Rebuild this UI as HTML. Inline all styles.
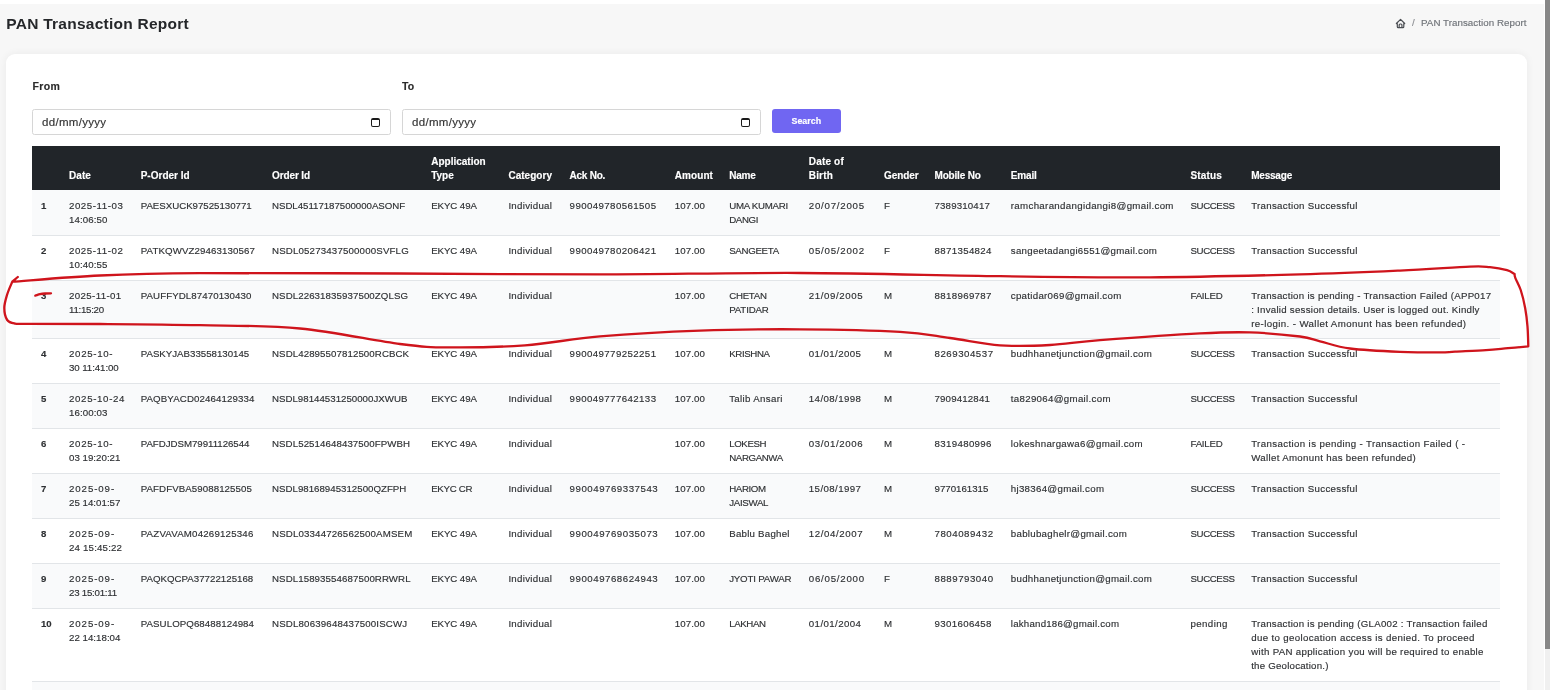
<!DOCTYPE html>
<html><head><meta charset="utf-8">
<style>
*{margin:0;padding:0;box-sizing:border-box}
html,body{width:1550px;height:690px;overflow:hidden;background:#fff;-webkit-font-smoothing:antialiased;font-family:"Liberation Sans",sans-serif;color:#2e3033}
.abs{position:absolute}
#bg{position:absolute;left:0;top:4px;width:1544px;height:686px;background:#f7f7f7}
#thumb{position:absolute;left:1545px;top:0;width:5px;height:649px;background:#878787}
#track{position:absolute;left:1545px;top:649px;width:5px;height:41px;background:#f0f0f0}
#card{position:absolute;left:6px;top:54px;width:1521px;height:700px;background:#fff;border-radius:9px;box-shadow:0 0 8px rgba(0,0,0,0.06)}
.t{position:absolute;white-space:nowrap;-webkit-text-stroke:0.15px currentColor}
.rw{position:absolute;left:32px;width:1468px}
.bd{position:absolute;left:32px;width:1468px;height:1px;background:#e2e5e8}
#thead{position:absolute;left:32px;top:146px;width:1468px;height:44px;background:#212529}
.inp{position:absolute;top:109px;height:26px;border:1px solid #d6d6d6;border-radius:2.5px;background:#fff}
.cal{position:absolute;top:7.6px;width:9px;height:9px;border:1.1px solid #1a1a1a;border-top-width:2.4px;border-radius:2px}
#btn{position:absolute;left:772px;top:109px;width:69px;height:24px;background:#7066f2;border-radius:3px}
.ov{position:absolute;left:0;top:0;pointer-events:none}
</style></head><body><div style="position:absolute;left:0;top:0;width:1550px;height:690px;will-change:transform">
<div id="bg"></div>
<div id="thumb"></div><div id="track"></div>
<div class="t" id="title" style="left:6.3px;top:13.5px;font-size:15.5px;line-height:20px;font-weight:bold;color:#25272a;letter-spacing:0.25px;-webkit-text-stroke:0">PAN Transaction Report</div>
<svg class="abs" style="left:1394.9px;top:17.6px" width="11.1" height="11.1" viewBox="0 0 24 24"><path d="M5 12H3l9-9 9 9h-2M5 12v7a2 2 0 0 0 2 2h10a2 2 0 0 0 2-2v-7M9 21v-6a2 2 0 0 1 2-2h2a2 2 0 0 1 2 2v6" fill="none" stroke="#4a4d52" stroke-width="2.6" stroke-linecap="round" stroke-linejoin="round"/></svg>
<div class="t" style="left:1412px;top:17px;font-size:9.8px;line-height:12px;color:#8a8d91">/</div>
<div class="t" style="left:1421px;top:17px;font-size:9.75px;line-height:12px;color:#6f7378;letter-spacing:0.05px">PAN Transaction Report</div>
<div id="card"></div>
<div class="t" style="left:32.5px;top:80px;font-size:10.5px;line-height:12px;font-weight:bold;color:#2b2b2b;letter-spacing:0.4px">From</div>
<div class="t" style="left:402px;top:80px;font-size:10.5px;line-height:12px;font-weight:bold;color:#2b2b2b">To</div>
<div class="inp" style="left:32px;width:359px"><div class="t" style="left:9px;top:5.5px;font-size:11.5px;line-height:12px;color:#333;letter-spacing:0.3px">dd/mm/yyyy</div><div class="cal" style="left:338px"></div></div>
<div class="inp" style="left:402px;width:359px"><div class="t" style="left:9px;top:5.5px;font-size:11.5px;line-height:12px;color:#333;letter-spacing:0.3px">dd/mm/yyyy</div><div class="cal" style="left:338px"></div></div>
<div id="btn"><div class="t" style="left:19.5px;top:5.8px;font-size:8.9px;line-height:12px;color:#fff;font-weight:bold">Search</div></div>
<div id="thead"></div>
<div class="rw" style="top:190px;height:45px;background:#f9fafb"></div>
<div class="rw" style="top:235px;height:45px;background:#ffffff"></div>
<div class="rw" style="top:280px;height:58px;background:#f9fafb"></div>
<div class="rw" style="top:338px;height:45px;background:#ffffff"></div>
<div class="rw" style="top:383px;height:45px;background:#f9fafb"></div>
<div class="rw" style="top:428px;height:45px;background:#ffffff"></div>
<div class="rw" style="top:473px;height:45px;background:#f9fafb"></div>
<div class="rw" style="top:518px;height:45px;background:#ffffff"></div>
<div class="rw" style="top:563px;height:45px;background:#f9fafb"></div>
<div class="rw" style="top:608px;height:73px;background:#ffffff"></div>
<div class="rw" style="top:681px;height:20px;background:#f9fafb"></div>
<div class="bd" style="top:235.0px"></div>
<div class="bd" style="top:280.0px"></div>
<div class="bd" style="top:338.0px"></div>
<div class="bd" style="top:383.0px"></div>
<div class="bd" style="top:428.0px"></div>
<div class="bd" style="top:473.0px"></div>
<div class="bd" style="top:518.0px"></div>
<div class="bd" style="top:563.0px"></div>
<div class="bd" style="top:608.0px"></div>
<div class="bd" style="top:681.0px"></div>
<div class="t" style="left:69.00px;top:168.53px;line-height:14px;font-size:10px;font-weight:bold;color:#fff"><span style="letter-spacing:0.081px">Date</span></div>
<div class="t" style="left:140.70px;top:168.53px;line-height:14px;font-size:10px;font-weight:bold;color:#fff"><span style="letter-spacing:0.010px">P-Order Id</span></div>
<div class="t" style="left:272.00px;top:168.53px;line-height:14px;font-size:10px;font-weight:bold;color:#fff"><span style="letter-spacing:-0.112px">Order Id</span></div>
<div class="t" style="left:431.20px;top:154.53px;line-height:14px;font-size:10px;font-weight:bold;color:#fff"><span style="letter-spacing:0.005px">Application</span><br><span style="letter-spacing:-0.024px">Type</span></div>
<div class="t" style="left:508.40px;top:168.53px;line-height:14px;font-size:10px;font-weight:bold;color:#fff"><span style="letter-spacing:0.032px">Category</span></div>
<div class="t" style="left:569.60px;top:168.53px;line-height:14px;font-size:10px;font-weight:bold;color:#fff"><span style="letter-spacing:-0.262px">Ack No.</span></div>
<div class="t" style="left:674.80px;top:168.53px;line-height:14px;font-size:10px;font-weight:bold;color:#fff"><span style="letter-spacing:0.072px">Amount</span></div>
<div class="t" style="left:729.20px;top:168.53px;line-height:14px;font-size:10px;font-weight:bold;color:#fff"><span style="letter-spacing:-0.234px">Name</span></div>
<div class="t" style="left:808.80px;top:154.53px;line-height:14px;font-size:10px;font-weight:bold;color:#fff"><span style="letter-spacing:0.173px">Date of</span><br><span style="letter-spacing:0.154px">Birth</span></div>
<div class="t" style="left:884.00px;top:168.53px;line-height:14px;font-size:10px;font-weight:bold;color:#fff"><span style="letter-spacing:-0.052px">Gender</span></div>
<div class="t" style="left:934.50px;top:168.53px;line-height:14px;font-size:10px;font-weight:bold;color:#fff"><span style="letter-spacing:-0.186px">Mobile No</span></div>
<div class="t" style="left:1010.80px;top:168.53px;line-height:14px;font-size:10px;font-weight:bold;color:#fff"><span style="letter-spacing:-0.176px">Email</span></div>
<div class="t" style="left:1190.50px;top:168.53px;line-height:14px;font-size:10px;font-weight:bold;color:#fff"><span style="letter-spacing:0.173px">Status</span></div>
<div class="t" style="left:1251.20px;top:168.53px;line-height:14px;font-size:10px;font-weight:bold;color:#fff"><span style="letter-spacing:-0.207px">Message</span></div>
<div class="t" style="left:41px;top:198.74px;line-height:14px;font-size:9.6px;font-weight:bold">1</div>
<div class="t" style="left:69.00px;top:198.84px;line-height:14px;font-size:9.7px"><span style="letter-spacing:0.549px">2025-11-03</span><br><span style="letter-spacing:0.088px">14:06:50</span></div>
<div class="t" style="left:140.70px;top:198.84px;line-height:14px;font-size:9.7px"><span style="letter-spacing:-0.013px">PAESXUCK97525130771</span></div>
<div class="t" style="left:272.00px;top:198.84px;line-height:14px;font-size:9.7px"><span style="letter-spacing:-0.037px">NSDL45117187500000ASONF</span></div>
<div class="t" style="left:431.20px;top:198.84px;line-height:14px;font-size:9.7px"><span style="letter-spacing:-0.082px">EKYC 49A</span></div>
<div class="t" style="left:508.40px;top:198.84px;line-height:14px;font-size:9.7px"><span style="letter-spacing:0.291px">Individual</span></div>
<div class="t" style="left:569.60px;top:198.84px;line-height:14px;font-size:9.7px"><span style="letter-spacing:0.402px">990049780561505</span></div>
<div class="t" style="left:674.80px;top:198.84px;line-height:14px;font-size:9.7px"><span style="letter-spacing:0.084px">107.00</span></div>
<div class="t" style="left:729.20px;top:198.84px;line-height:14px;font-size:9.7px"><span style="letter-spacing:-0.273px">UMA KUMARI</span><br><span style="letter-spacing:-0.365px">DANGI</span></div>
<div class="t" style="left:808.80px;top:198.84px;line-height:14px;font-size:9.7px"><span style="letter-spacing:0.762px">20/07/2005</span></div>
<div class="t" style="left:884.00px;top:198.84px;line-height:14px;font-size:9.7px"><span style="letter-spacing:-0.352px">F</span></div>
<div class="t" style="left:934.50px;top:198.84px;line-height:14px;font-size:9.7px"><span style="letter-spacing:0.165px">7389310417</span></div>
<div class="t" style="left:1010.80px;top:198.84px;line-height:14px;font-size:9.7px"><span style="letter-spacing:0.329px">ramcharandangidangi8@gmail.com</span></div>
<div class="t" style="left:1190.50px;top:198.84px;line-height:14px;font-size:9.7px"><span style="letter-spacing:-0.398px">SUCCESS</span></div>
<div class="t" style="left:1251.20px;top:198.84px;line-height:14px;font-size:9.7px"><span style="letter-spacing:0.305px">Transaction Successful</span></div>
<div class="t" style="left:41px;top:243.74px;line-height:14px;font-size:9.6px;font-weight:bold">2</div>
<div class="t" style="left:69.00px;top:243.84px;line-height:14px;font-size:9.7px"><span style="letter-spacing:0.549px">2025-11-02</span><br><span style="letter-spacing:0.088px">10:40:55</span></div>
<div class="t" style="left:140.70px;top:243.84px;line-height:14px;font-size:9.7px"><span style="letter-spacing:0.113px">PATKQWVZ29463130567</span></div>
<div class="t" style="left:272.00px;top:243.84px;line-height:14px;font-size:9.7px"><span style="letter-spacing:0.167px">NSDL05273437500000SVFLG</span></div>
<div class="t" style="left:431.20px;top:243.84px;line-height:14px;font-size:9.7px"><span style="letter-spacing:-0.082px">EKYC 49A</span></div>
<div class="t" style="left:508.40px;top:243.84px;line-height:14px;font-size:9.7px"><span style="letter-spacing:0.291px">Individual</span></div>
<div class="t" style="left:569.60px;top:243.84px;line-height:14px;font-size:9.7px"><span style="letter-spacing:0.402px">990049780206421</span></div>
<div class="t" style="left:674.80px;top:243.84px;line-height:14px;font-size:9.7px"><span style="letter-spacing:0.084px">107.00</span></div>
<div class="t" style="left:729.20px;top:243.84px;line-height:14px;font-size:9.7px"><span style="letter-spacing:-0.303px">SANGEETA</span></div>
<div class="t" style="left:808.80px;top:243.84px;line-height:14px;font-size:9.7px"><span style="letter-spacing:0.762px">05/05/2002</span></div>
<div class="t" style="left:884.00px;top:243.84px;line-height:14px;font-size:9.7px"><span style="letter-spacing:-0.352px">F</span></div>
<div class="t" style="left:934.50px;top:243.84px;line-height:14px;font-size:9.7px"><span style="letter-spacing:0.343px">8871354824</span></div>
<div class="t" style="left:1010.80px;top:243.84px;line-height:14px;font-size:9.7px"><span style="letter-spacing:0.268px">sangeetadangi6551@gmail.com</span></div>
<div class="t" style="left:1190.50px;top:243.84px;line-height:14px;font-size:9.7px"><span style="letter-spacing:-0.398px">SUCCESS</span></div>
<div class="t" style="left:1251.20px;top:243.84px;line-height:14px;font-size:9.7px"><span style="letter-spacing:0.305px">Transaction Successful</span></div>
<div class="t" style="left:41px;top:288.74px;line-height:14px;font-size:9.6px;font-weight:bold">3</div>
<div class="t" style="left:69.00px;top:288.84px;line-height:14px;font-size:9.7px"><span style="letter-spacing:0.371px">2025-11-01</span><br><span style="letter-spacing:-0.265px">11:15:20</span></div>
<div class="t" style="left:140.70px;top:288.84px;line-height:14px;font-size:9.7px"><span style="letter-spacing:0.087px">PAUFFYDL87470130430</span></div>
<div class="t" style="left:272.00px;top:288.84px;line-height:14px;font-size:9.7px"><span style="letter-spacing:0.087px">NSDL22631835937500ZQLSG</span></div>
<div class="t" style="left:431.20px;top:288.84px;line-height:14px;font-size:9.7px"><span style="letter-spacing:-0.082px">EKYC 49A</span></div>
<div class="t" style="left:508.40px;top:288.84px;line-height:14px;font-size:9.7px"><span style="letter-spacing:0.291px">Individual</span></div>
<div class="t" style="left:674.80px;top:288.84px;line-height:14px;font-size:9.7px"><span style="letter-spacing:0.084px">107.00</span></div>
<div class="t" style="left:729.20px;top:288.84px;line-height:14px;font-size:9.7px"><span style="letter-spacing:-0.275px">CHETAN</span><br><span style="letter-spacing:-0.152px">PATIDAR</span></div>
<div class="t" style="left:808.80px;top:288.84px;line-height:14px;font-size:9.7px"><span style="letter-spacing:0.585px">21/09/2005</span></div>
<div class="t" style="left:884.00px;top:288.84px;line-height:14px;font-size:9.7px"><span style="letter-spacing:-0.481px">M</span></div>
<div class="t" style="left:934.50px;top:288.84px;line-height:14px;font-size:9.7px"><span style="letter-spacing:0.343px">8818969787</span></div>
<div class="t" style="left:1010.80px;top:288.84px;line-height:14px;font-size:9.7px"><span style="letter-spacing:0.293px">cpatidar069@gmail.com</span></div>
<div class="t" style="left:1190.50px;top:288.84px;line-height:14px;font-size:9.7px"><span style="letter-spacing:-0.247px">FAILED</span></div>
<div class="t" style="left:1251.20px;top:288.84px;line-height:14px;font-size:9.7px"><span style="letter-spacing:0.271px">Transaction is pending - Transaction Failed (APP017</span><br><span style="letter-spacing:0.258px">: Invalid session details. User is logged out. Kindly</span><br><span style="letter-spacing:0.386px">re-login. - Wallet Amonunt has been refunded)</span></div>
<div class="t" style="left:41px;top:346.74px;line-height:14px;font-size:9.6px;font-weight:bold">4</div>
<div class="t" style="left:69.00px;top:346.84px;line-height:14px;font-size:9.7px"><span style="letter-spacing:0.687px">2025-10-</span><br><span style="letter-spacing:-0.075px">30 11:41:00</span></div>
<div class="t" style="left:140.70px;top:346.84px;line-height:14px;font-size:9.7px"><span style="letter-spacing:-0.005px">PASKYJAB33558130145</span></div>
<div class="t" style="left:272.00px;top:346.84px;line-height:14px;font-size:9.7px"><span style="letter-spacing:0.085px">NSDL42895507812500RCBCK</span></div>
<div class="t" style="left:431.20px;top:346.84px;line-height:14px;font-size:9.7px"><span style="letter-spacing:-0.082px">EKYC 49A</span></div>
<div class="t" style="left:508.40px;top:346.84px;line-height:14px;font-size:9.7px"><span style="letter-spacing:0.291px">Individual</span></div>
<div class="t" style="left:569.60px;top:346.84px;line-height:14px;font-size:9.7px"><span style="letter-spacing:0.402px">990049779252251</span></div>
<div class="t" style="left:674.80px;top:346.84px;line-height:14px;font-size:9.7px"><span style="letter-spacing:0.084px">107.00</span></div>
<div class="t" style="left:729.20px;top:346.84px;line-height:14px;font-size:9.7px"><span style="letter-spacing:-0.366px">KRISHNA</span></div>
<div class="t" style="left:808.80px;top:346.84px;line-height:14px;font-size:9.7px"><span style="letter-spacing:0.408px">01/01/2005</span></div>
<div class="t" style="left:884.00px;top:346.84px;line-height:14px;font-size:9.7px"><span style="letter-spacing:-0.481px">M</span></div>
<div class="t" style="left:934.50px;top:346.84px;line-height:14px;font-size:9.7px"><span style="letter-spacing:0.520px">8269304537</span></div>
<div class="t" style="left:1010.80px;top:346.84px;line-height:14px;font-size:9.7px"><span style="letter-spacing:0.303px">budhhanetjunction@gmail.com</span></div>
<div class="t" style="left:1190.50px;top:346.84px;line-height:14px;font-size:9.7px"><span style="letter-spacing:-0.398px">SUCCESS</span></div>
<div class="t" style="left:1251.20px;top:346.84px;line-height:14px;font-size:9.7px"><span style="letter-spacing:0.305px">Transaction Successful</span></div>
<div class="t" style="left:41px;top:391.74px;line-height:14px;font-size:9.6px;font-weight:bold">5</div>
<div class="t" style="left:69.00px;top:391.84px;line-height:14px;font-size:9.7px"><span style="letter-spacing:0.654px">2025-10-24</span><br><span style="letter-spacing:0.088px">16:00:03</span></div>
<div class="t" style="left:140.70px;top:391.84px;line-height:14px;font-size:9.7px"><span style="letter-spacing:0.115px">PAQBYACD02464129334</span></div>
<div class="t" style="left:272.00px;top:391.84px;line-height:14px;font-size:9.7px"><span style="letter-spacing:0.008px">NSDL98144531250000JXWUB</span></div>
<div class="t" style="left:431.20px;top:391.84px;line-height:14px;font-size:9.7px"><span style="letter-spacing:-0.082px">EKYC 49A</span></div>
<div class="t" style="left:508.40px;top:391.84px;line-height:14px;font-size:9.7px"><span style="letter-spacing:0.291px">Individual</span></div>
<div class="t" style="left:569.60px;top:391.84px;line-height:14px;font-size:9.7px"><span style="letter-spacing:0.402px">990049777642133</span></div>
<div class="t" style="left:674.80px;top:391.84px;line-height:14px;font-size:9.7px"><span style="letter-spacing:0.084px">107.00</span></div>
<div class="t" style="left:729.20px;top:391.84px;line-height:14px;font-size:9.7px"><span style="letter-spacing:0.335px">Talib Ansari</span></div>
<div class="t" style="left:808.80px;top:391.84px;line-height:14px;font-size:9.7px"><span style="letter-spacing:0.408px">14/08/1998</span></div>
<div class="t" style="left:884.00px;top:391.84px;line-height:14px;font-size:9.7px"><span style="letter-spacing:-0.481px">M</span></div>
<div class="t" style="left:934.50px;top:391.84px;line-height:14px;font-size:9.7px"><span style="letter-spacing:0.165px">7909412841</span></div>
<div class="t" style="left:1010.80px;top:391.84px;line-height:14px;font-size:9.7px"><span style="letter-spacing:0.311px">ta829064@gmail.com</span></div>
<div class="t" style="left:1190.50px;top:391.84px;line-height:14px;font-size:9.7px"><span style="letter-spacing:-0.398px">SUCCESS</span></div>
<div class="t" style="left:1251.20px;top:391.84px;line-height:14px;font-size:9.7px"><span style="letter-spacing:0.305px">Transaction Successful</span></div>
<div class="t" style="left:41px;top:436.74px;line-height:14px;font-size:9.6px;font-weight:bold">6</div>
<div class="t" style="left:69.00px;top:436.84px;line-height:14px;font-size:9.7px"><span style="letter-spacing:0.687px">2025-10-</span><br><span style="letter-spacing:0.021px">03 19:20:21</span></div>
<div class="t" style="left:140.70px;top:436.84px;line-height:14px;font-size:9.7px"><span style="letter-spacing:-0.029px">PAFDJDSM79911126544</span></div>
<div class="t" style="left:272.00px;top:436.84px;line-height:14px;font-size:9.7px"><span style="letter-spacing:0.082px">NSDL52514648437500FPWBH</span></div>
<div class="t" style="left:431.20px;top:436.84px;line-height:14px;font-size:9.7px"><span style="letter-spacing:-0.082px">EKYC 49A</span></div>
<div class="t" style="left:508.40px;top:436.84px;line-height:14px;font-size:9.7px"><span style="letter-spacing:0.291px">Individual</span></div>
<div class="t" style="left:674.80px;top:436.84px;line-height:14px;font-size:9.7px"><span style="letter-spacing:0.084px">107.00</span></div>
<div class="t" style="left:729.20px;top:436.84px;line-height:14px;font-size:9.7px"><span style="letter-spacing:-0.390px">LOKESH</span><br><span style="letter-spacing:-0.380px">NARGANWA</span></div>
<div class="t" style="left:808.80px;top:436.84px;line-height:14px;font-size:9.7px"><span style="letter-spacing:0.585px">03/01/2006</span></div>
<div class="t" style="left:884.00px;top:436.84px;line-height:14px;font-size:9.7px"><span style="letter-spacing:-0.481px">M</span></div>
<div class="t" style="left:934.50px;top:436.84px;line-height:14px;font-size:9.7px"><span style="letter-spacing:0.343px">8319480996</span></div>
<div class="t" style="left:1010.80px;top:436.84px;line-height:14px;font-size:9.7px"><span style="letter-spacing:0.316px">lokeshnargawa6@gmail.com</span></div>
<div class="t" style="left:1190.50px;top:436.84px;line-height:14px;font-size:9.7px"><span style="letter-spacing:-0.247px">FAILED</span></div>
<div class="t" style="left:1251.20px;top:436.84px;line-height:14px;font-size:9.7px"><span style="letter-spacing:0.373px">Transaction is pending - Transaction Failed ( -</span><br><span style="letter-spacing:0.324px">Wallet Amonunt has been refunded)</span></div>
<div class="t" style="left:41px;top:481.74px;line-height:14px;font-size:9.6px;font-weight:bold">7</div>
<div class="t" style="left:69.00px;top:481.84px;line-height:14px;font-size:9.7px"><span style="letter-spacing:0.909px">2025-09-</span><br><span style="letter-spacing:0.021px">25 14:01:57</span></div>
<div class="t" style="left:140.70px;top:481.84px;line-height:14px;font-size:9.7px"><span style="letter-spacing:0.085px">PAFDFVBA59088125505</span></div>
<div class="t" style="left:272.00px;top:481.84px;line-height:14px;font-size:9.7px"><span style="letter-spacing:0.010px">NSDL98168945312500QZFPH</span></div>
<div class="t" style="left:431.20px;top:481.84px;line-height:14px;font-size:9.7px"><span style="letter-spacing:-0.307px">EKYC CR</span></div>
<div class="t" style="left:508.40px;top:481.84px;line-height:14px;font-size:9.7px"><span style="letter-spacing:0.291px">Individual</span></div>
<div class="t" style="left:569.60px;top:481.84px;line-height:14px;font-size:9.7px"><span style="letter-spacing:0.520px">990049769337543</span></div>
<div class="t" style="left:674.80px;top:481.84px;line-height:14px;font-size:9.7px"><span style="letter-spacing:0.084px">107.00</span></div>
<div class="t" style="left:729.20px;top:481.84px;line-height:14px;font-size:9.7px"><span style="letter-spacing:-0.385px">HARIOM</span><br><span style="letter-spacing:-0.301px">JAISWAL</span></div>
<div class="t" style="left:808.80px;top:481.84px;line-height:14px;font-size:9.7px"><span style="letter-spacing:0.408px">15/08/1997</span></div>
<div class="t" style="left:884.00px;top:481.84px;line-height:14px;font-size:9.7px"><span style="letter-spacing:-0.481px">M</span></div>
<div class="t" style="left:934.50px;top:481.84px;line-height:14px;font-size:9.7px"><span style="letter-spacing:-0.012px">9770161315</span></div>
<div class="t" style="left:1010.80px;top:481.84px;line-height:14px;font-size:9.7px"><span style="letter-spacing:0.296px">hj38364@gmail.com</span></div>
<div class="t" style="left:1190.50px;top:481.84px;line-height:14px;font-size:9.7px"><span style="letter-spacing:-0.398px">SUCCESS</span></div>
<div class="t" style="left:1251.20px;top:481.84px;line-height:14px;font-size:9.7px"><span style="letter-spacing:0.305px">Transaction Successful</span></div>
<div class="t" style="left:41px;top:526.74px;line-height:14px;font-size:9.6px;font-weight:bold">8</div>
<div class="t" style="left:69.00px;top:526.84px;line-height:14px;font-size:9.7px"><span style="letter-spacing:0.909px">2025-09-</span><br><span style="letter-spacing:0.182px">24 15:45:22</span></div>
<div class="t" style="left:140.70px;top:526.84px;line-height:14px;font-size:9.7px"><span style="letter-spacing:0.194px">PAZVAVAM04269125346</span></div>
<div class="t" style="left:272.00px;top:526.84px;line-height:14px;font-size:9.7px"><span style="letter-spacing:0.158px">NSDL03344726562500AMSEM</span></div>
<div class="t" style="left:431.20px;top:526.84px;line-height:14px;font-size:9.7px"><span style="letter-spacing:-0.082px">EKYC 49A</span></div>
<div class="t" style="left:508.40px;top:526.84px;line-height:14px;font-size:9.7px"><span style="letter-spacing:0.291px">Individual</span></div>
<div class="t" style="left:569.60px;top:526.84px;line-height:14px;font-size:9.7px"><span style="letter-spacing:0.520px">990049769035073</span></div>
<div class="t" style="left:674.80px;top:526.84px;line-height:14px;font-size:9.7px"><span style="letter-spacing:0.084px">107.00</span></div>
<div class="t" style="left:729.20px;top:526.84px;line-height:14px;font-size:9.7px"><span style="letter-spacing:0.238px">Bablu Baghel</span></div>
<div class="t" style="left:808.80px;top:526.84px;line-height:14px;font-size:9.7px"><span style="letter-spacing:0.585px">12/04/2007</span></div>
<div class="t" style="left:884.00px;top:526.84px;line-height:14px;font-size:9.7px"><span style="letter-spacing:-0.481px">M</span></div>
<div class="t" style="left:934.50px;top:526.84px;line-height:14px;font-size:9.7px"><span style="letter-spacing:0.520px">7804089432</span></div>
<div class="t" style="left:1010.80px;top:526.84px;line-height:14px;font-size:9.7px"><span style="letter-spacing:0.287px">bablubaghelr@gmail.com</span></div>
<div class="t" style="left:1190.50px;top:526.84px;line-height:14px;font-size:9.7px"><span style="letter-spacing:-0.398px">SUCCESS</span></div>
<div class="t" style="left:1251.20px;top:526.84px;line-height:14px;font-size:9.7px"><span style="letter-spacing:0.305px">Transaction Successful</span></div>
<div class="t" style="left:41px;top:571.74px;line-height:14px;font-size:9.6px;font-weight:bold">9</div>
<div class="t" style="left:69.00px;top:571.84px;line-height:14px;font-size:9.7px"><span style="letter-spacing:0.909px">2025-09-</span><br><span style="letter-spacing:-0.236px">23 15:01:11</span></div>
<div class="t" style="left:140.70px;top:571.84px;line-height:14px;font-size:9.7px"><span style="letter-spacing:0.020px">PAQKQCPA37722125168</span></div>
<div class="t" style="left:272.00px;top:571.84px;line-height:14px;font-size:9.7px"><span style="letter-spacing:0.088px">NSDL15893554687500RRWRL</span></div>
<div class="t" style="left:431.20px;top:571.84px;line-height:14px;font-size:9.7px"><span style="letter-spacing:-0.082px">EKYC 49A</span></div>
<div class="t" style="left:508.40px;top:571.84px;line-height:14px;font-size:9.7px"><span style="letter-spacing:0.291px">Individual</span></div>
<div class="t" style="left:569.60px;top:571.84px;line-height:14px;font-size:9.7px"><span style="letter-spacing:0.520px">990049768624943</span></div>
<div class="t" style="left:674.80px;top:571.84px;line-height:14px;font-size:9.7px"><span style="letter-spacing:0.084px">107.00</span></div>
<div class="t" style="left:729.20px;top:571.84px;line-height:14px;font-size:9.7px"><span style="letter-spacing:-0.187px">JYOTI PAWAR</span></div>
<div class="t" style="left:808.80px;top:571.84px;line-height:14px;font-size:9.7px"><span style="letter-spacing:0.762px">06/05/2000</span></div>
<div class="t" style="left:884.00px;top:571.84px;line-height:14px;font-size:9.7px"><span style="letter-spacing:-0.352px">F</span></div>
<div class="t" style="left:934.50px;top:571.84px;line-height:14px;font-size:9.7px"><span style="letter-spacing:0.520px">8889793040</span></div>
<div class="t" style="left:1010.80px;top:571.84px;line-height:14px;font-size:9.7px"><span style="letter-spacing:0.303px">budhhanetjunction@gmail.com</span></div>
<div class="t" style="left:1190.50px;top:571.84px;line-height:14px;font-size:9.7px"><span style="letter-spacing:-0.398px">SUCCESS</span></div>
<div class="t" style="left:1251.20px;top:571.84px;line-height:14px;font-size:9.7px"><span style="letter-spacing:0.305px">Transaction Successful</span></div>
<div class="t" style="left:41px;top:616.74px;line-height:14px;font-size:9.6px;font-weight:bold">10</div>
<div class="t" style="left:69.00px;top:616.84px;line-height:14px;font-size:9.7px"><span style="letter-spacing:0.909px">2025-09-</span><br><span style="letter-spacing:0.021px">22 14:18:04</span></div>
<div class="t" style="left:140.70px;top:616.84px;line-height:14px;font-size:9.7px"><span style="letter-spacing:0.079px">PASULOPQ68488124984</span></div>
<div class="t" style="left:272.00px;top:616.84px;line-height:14px;font-size:9.7px"><span style="letter-spacing:0.172px">NSDL80639648437500ISCWJ</span></div>
<div class="t" style="left:431.20px;top:616.84px;line-height:14px;font-size:9.7px"><span style="letter-spacing:-0.082px">EKYC 49A</span></div>
<div class="t" style="left:508.40px;top:616.84px;line-height:14px;font-size:9.7px"><span style="letter-spacing:0.291px">Individual</span></div>
<div class="t" style="left:674.80px;top:616.84px;line-height:14px;font-size:9.7px"><span style="letter-spacing:0.084px">107.00</span></div>
<div class="t" style="left:729.20px;top:616.84px;line-height:14px;font-size:9.7px"><span style="letter-spacing:-0.385px">LAKHAN</span></div>
<div class="t" style="left:808.80px;top:616.84px;line-height:14px;font-size:9.7px"><span style="letter-spacing:0.408px">01/01/2004</span></div>
<div class="t" style="left:884.00px;top:616.84px;line-height:14px;font-size:9.7px"><span style="letter-spacing:-0.481px">M</span></div>
<div class="t" style="left:934.50px;top:616.84px;line-height:14px;font-size:9.7px"><span style="letter-spacing:0.343px">9301606458</span></div>
<div class="t" style="left:1010.80px;top:616.84px;line-height:14px;font-size:9.7px"><span style="letter-spacing:0.217px">lakhand186@gmail.com</span></div>
<div class="t" style="left:1190.50px;top:616.84px;line-height:14px;font-size:9.7px"><span style="letter-spacing:0.395px">pending</span></div>
<div class="t" style="left:1251.20px;top:616.84px;line-height:14px;font-size:9.7px"><span style="letter-spacing:0.270px">Transaction is pending (GLA002 : Transaction failed</span><br><span style="letter-spacing:0.359px">due to geolocation access is denied. To proceed</span><br><span style="letter-spacing:0.308px">with PAN application you will be required to enable</span><br><span style="letter-spacing:0.219px">the Geolocation.)</span></div>
<svg class="ov" width="1550" height="690" viewBox="0 0 1550 690"><path d="M17.8,277.0 C16.9,277.8 13.2,280.9 12.3,281.7 C11.4,283.9 8.3,290.6 7.0,295.0 C5.7,299.4 4.3,303.8 4.3,308.0 C4.3,312.2 5.5,317.4 7.2,320.0 C8.9,322.6 10.9,322.9 14.5,323.5 C18.1,324.1 14.8,323.7 29.0,323.8 C43.2,323.9 71.5,323.8 100.0,324.0 C128.5,324.2 166.7,324.4 200.0,325.2 C233.3,325.9 266.7,325.4 300.0,328.5 C333.3,331.6 375.0,340.9 400.0,344.0 C425.0,347.1 429.2,347.2 450.0,347.4 C470.8,347.6 500.0,347.1 525.0,345.3 C550.0,343.5 570.8,338.8 600.0,336.3 C629.2,333.9 666.7,331.8 700.0,330.6 C733.3,329.4 766.7,329.1 800.0,329.3 C833.3,329.5 875.0,330.4 900.0,331.9 C925.0,333.3 933.3,335.8 950.0,338.0 C966.7,340.2 983.3,344.1 1000.0,345.3 C1016.7,346.5 1033.3,345.9 1050.0,345.0 C1066.7,344.1 1075.0,342.1 1100.0,340.2 C1125.0,338.3 1175.0,334.7 1200.0,333.4 C1225.0,332.1 1233.3,331.9 1250.0,332.4 C1266.7,332.9 1288.3,335.0 1300.0,336.5 C1311.7,338.0 1311.7,339.3 1320.0,341.3 C1328.3,343.3 1336.7,346.8 1350.0,348.5 C1363.3,350.2 1385.0,351.2 1400.0,351.8 C1415.0,352.4 1430.8,352.4 1440.0,352.4 C1449.2,352.4 1447.3,352.0 1455.0,351.6 C1462.7,351.2 1477.2,350.7 1486.0,350.1 C1494.8,349.5 1501.0,348.8 1508.0,348.2 C1515.0,347.6 1524.9,346.6 1528.3,346.3 C1528.2,343.0 1528.0,332.8 1527.5,326.5 C1527.0,320.2 1526.3,314.4 1525.2,308.3 C1524.1,302.2 1522.4,295.1 1520.7,290.0 C1519.0,284.9 1516.3,280.5 1515.3,277.8 C1514.3,275.1 1514.7,274.6 1514.6,274.0 C1513.3,273.4 1511.1,271.3 1507.0,270.2 C1502.9,269.1 1496.2,267.8 1490.0,267.2 C1483.8,266.6 1485.0,266.0 1470.0,266.6 C1455.0,267.2 1428.3,269.3 1400.0,270.6 C1371.7,271.9 1341.7,273.3 1300.0,274.4 C1258.3,275.5 1200.0,277.0 1150.0,277.3 C1100.0,277.6 1058.3,276.9 1000.0,276.2 C941.7,275.5 866.7,273.3 800.0,273.0 C733.3,272.7 666.7,274.3 600.0,274.4 C533.3,274.5 466.7,273.7 400.0,273.5 C333.3,273.3 250.0,272.9 200.0,273.2 C150.0,273.5 131.3,274.1 100.0,275.5 C68.7,276.9 26.9,280.7 12.3,281.7" fill="none" stroke="#cf141c" stroke-width="2.3" stroke-linecap="round" stroke-linejoin="round"/><path d="M35.3,295.6 C36.1,295.4 38.4,294.6 40.0,294.2 C41.6,293.8 43.2,293.6 45.0,293.5 C46.8,293.4 50.0,293.3 51.0,293.3" fill="none" stroke="#cf141c" stroke-width="2.3" stroke-linecap="round"/></svg>
</div></body></html>
